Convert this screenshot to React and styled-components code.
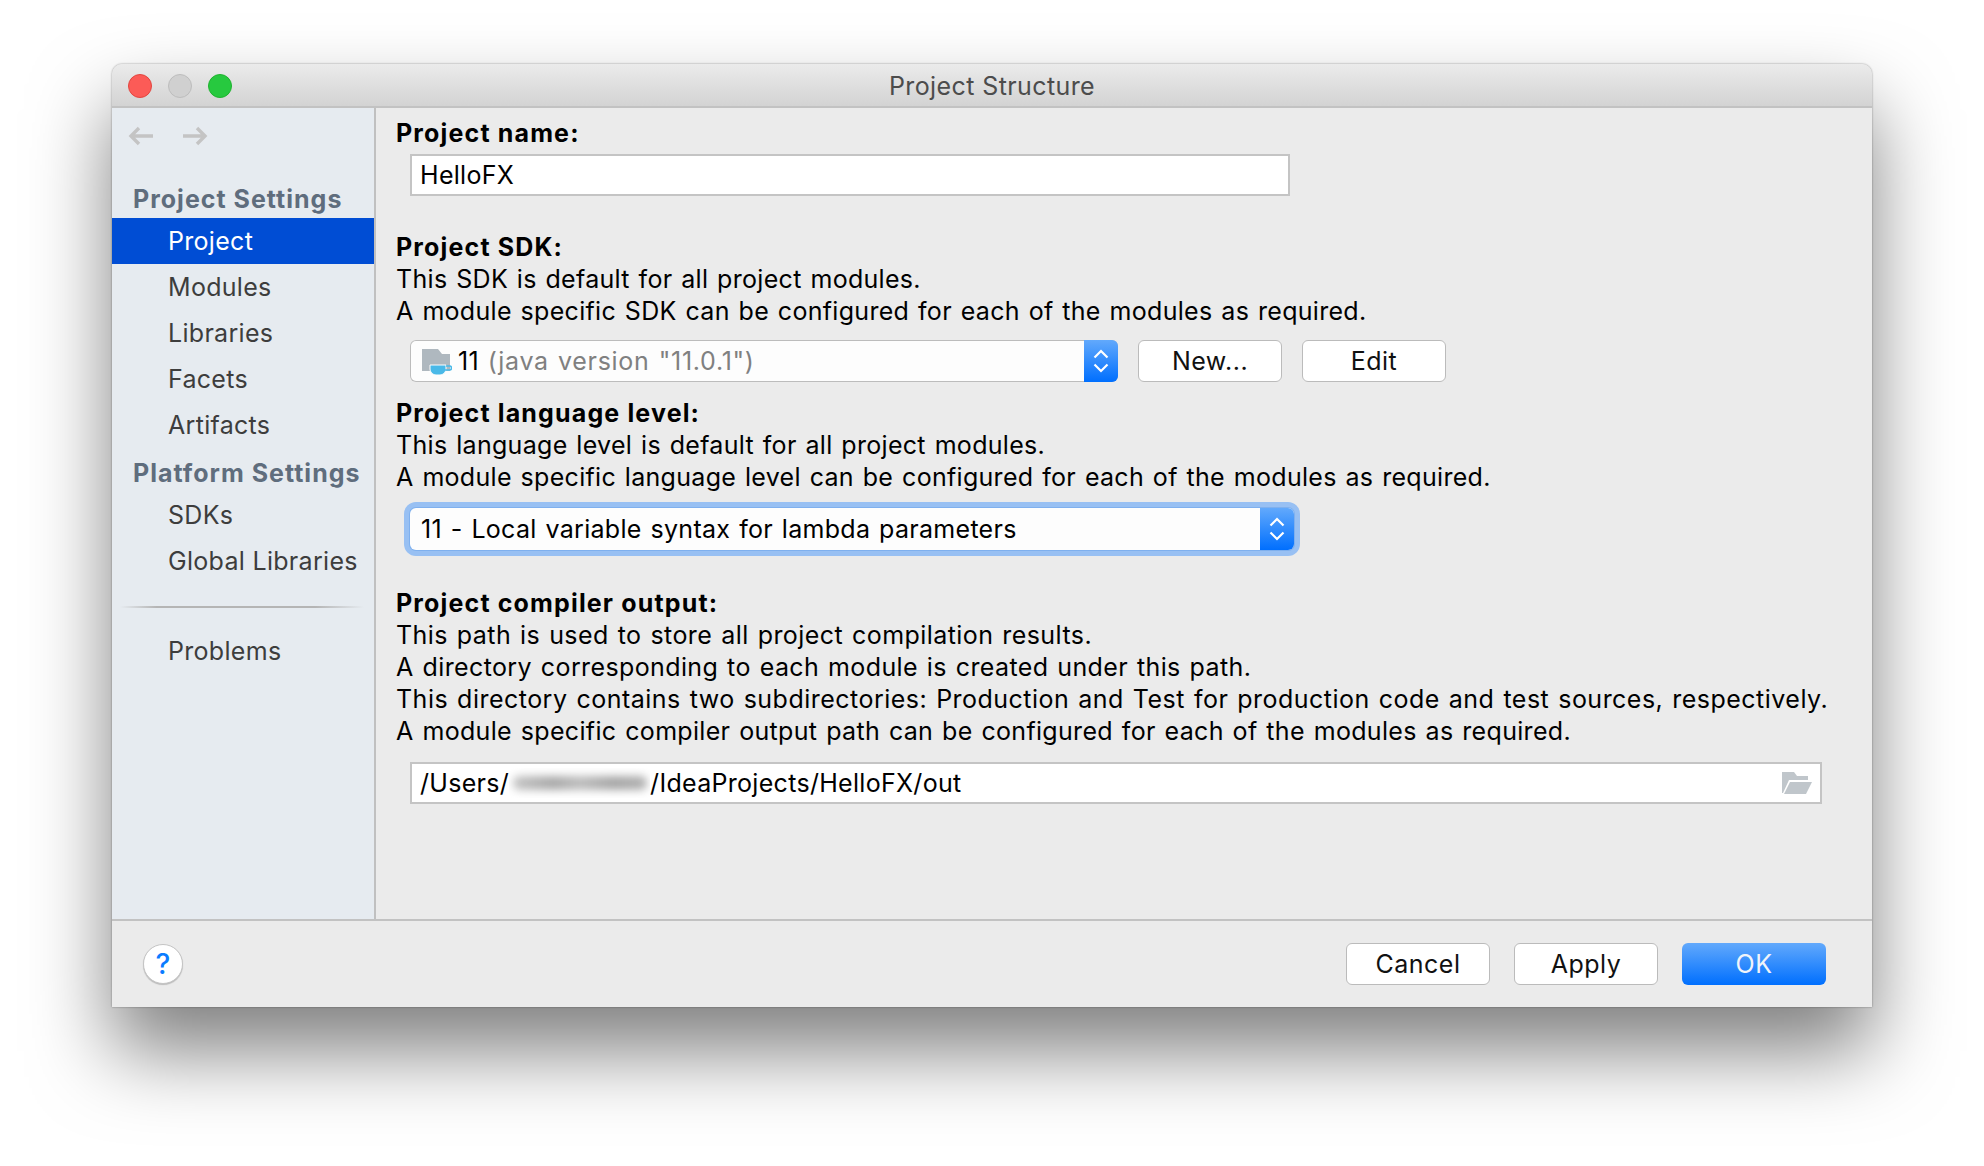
import React from 'react';
import styled, { createGlobalStyle } from 'styled-components';

const GlobalStyle = createGlobalStyle`
  html, body {
    margin: 0;
    background: #ffffff;
    font-family: Inter, "Liberation Sans", sans-serif;
    font-size: 25px;
    letter-spacing: 0.3px;
    word-spacing: 1.5px;
    color: #000;
  }
`;

const Page = styled.div`
  width: 1984px;
  height: 1166px;
  padding: 64px 0 0 112px;
  box-sizing: border-box;
  overflow: hidden;
`;

const Window = styled.div`
  width: 1760px;
  height: 943px;
  display: flex;
  flex-direction: column;
  background: #ebebeb;
  border-radius: 10px 10px 0 0;
  box-shadow: 0 0 2px rgba(0, 0, 0, 0.45), 0 44px 80px rgba(0, 0, 0, 0.5);
`;

const TitleBar = styled.div`
  height: 44px;
  flex: none;
  position: relative;
  display: flex;
  align-items: center;
  justify-content: center;
  padding-top: 2px;
  box-sizing: border-box;
  background: linear-gradient(#ebebeb, #d3d3d3);
  border-bottom: 2px solid #c2c2c2;
  border-radius: 10px 10px 0 0;
`;

const Lights = styled.div`
  position: absolute;
  left: 16px;
  top: 10px;
  display: flex;
  gap: 16px;
`;

const Light = styled.span`
  width: 24px;
  height: 24px;
  box-sizing: border-box;
  border-radius: 50%;
  background: ${(p) => p.$color};
  border: 1px solid ${(p) => p.$edge};
`;

const Title = styled.div`
  color: #4c4c4c;
  letter-spacing: 0.4px;
  word-spacing: 0;
`;

const Body = styled.div`
  flex: 1;
  display: flex;
  min-height: 0;
`;

const Sidebar = styled.div`
  width: 262px;
  flex: none;
  background: #e6ebf0;
  border-right: 2px solid #c0c0c0;
`;

const ArrowRow = styled.div`
  height: 56px;
  padding-left: 16px;
  display: flex;
  align-items: center;
  gap: 28px;
`;

const GroupTitle = styled.div`
  height: 38px;
  line-height: 38px;
  padding: ${(p) => p.$top}px 0 0 21px;
  font-weight: 700;
  letter-spacing: 1px;
  word-spacing: 0;
  color: #5f6d7d;
`;

const NavItem = styled.div`
  height: 46px;
  line-height: 46px;
  padding-left: 56px;
  word-spacing: 0;
  color: ${(p) => (p.$active ? '#fff' : '#3d3d3d')};
  background: ${(p) => (p.$active ? '#004dd4' : 'transparent')};
`;

const NavDivider = styled.div`
  height: 2px;
  margin: 22px 10px 20px 8px;
  background: linear-gradient(90deg, #e6ebf0, #b5b5b5 15%, #b5b5b5 80%, #e6ebf0);
`;

const Main = styled.div`
  flex: 1;
  padding: 9px 0 0 20px;
`;

const Label = styled.div`
  font-weight: 700;
  line-height: 32px;
  letter-spacing: 1.15px;
  word-spacing: 0;
  margin-top: ${(p) => p.$top || 0}px;
`;

const Hint = styled.div`
  line-height: 32px;
  white-space: nowrap;
  letter-spacing: ${(p) => p.$track || 0.3}px;
`;

const Field = styled.div`
  width: ${(p) => p.$width}px;
  height: 42px;
  margin: ${(p) => p.$gap}px 0 0 14px;
  padding: 0 8px 0 8px;
  box-sizing: border-box;
  display: flex;
  align-items: center;
  justify-content: space-between;
  background: #fff;
  border: 2px solid #c4c4c4;
`;

const ComboRow = styled.div`
  display: flex;
  align-items: center;
  gap: 20px;
  margin: 13px 0 0 14px;
`;

const Combo = styled.div`
  width: ${(p) => p.$width}px;
  height: 42px;
  box-sizing: border-box;
  display: flex;
  background: #fdfdfd;
  border-radius: 6px;
  box-shadow: ${(p) =>
    p.$focused ? '0 0 0 1px #7fb0ee, 0 0 0 6px #98c0f3' : 'inset 0 0 0 1px #bcbcbc'};
  margin: ${(p) => (p.$focused ? '15px 0 0 14px' : '0')};
`;

const ComboText = styled.div`
  flex: 1;
  display: flex;
  align-items: center;
  gap: 6px;
  padding-left: ${(p) => p.$pad}px;
`;

const Muted = styled.span`
  color: #808080;
  letter-spacing: 0.7px;
`;

const Stepper = styled.div`
  width: 34px;
  flex: none;
  display: flex;
  align-items: center;
  justify-content: center;
  border-radius: 0 6px 6px 0;
  background: linear-gradient(#62a9fc, #006ffe);
`;

const Button = styled.div`
  width: 144px;
  height: 42px;
  box-sizing: border-box;
  display: flex;
  align-items: center;
  justify-content: center;
  border-radius: 6px;
  letter-spacing: 0.5px;
  color: ${(p) => (p.$primary ? '#f0f4fa' : '#111')};
  background: ${(p) => (p.$primary ? 'linear-gradient(#62a9fc, #006ffe)' : '#fff')};
  border: ${(p) => (p.$primary ? 'none' : '1px solid #bbb')};
`;

const Path = styled.div`
  display: flex;
  align-items: center;
`;

const Redacted = styled.span`
  width: 141px;
  height: 30px;
  display: flex;
  align-items: center;
  justify-content: center;
  background: #fff;
  overflow: hidden;
`;

const RedactedInk = styled.span`
  width: 134px;
  height: 14px;
  background: linear-gradient(90deg, #c4c4c4, #a8a8a8 30%, #bcbcbc 50%, #a6a6a6 75%, #b0b0b0);
  border-radius: 6px;
  filter: blur(4px);
`;

const Footer = styled.div`
  height: 88px;
  flex: none;
  box-sizing: border-box;
  border-top: 2px solid #c2c2c2;
  display: flex;
  align-items: center;
  justify-content: space-between;
  padding: 0 46px 0 31px;
`;

const HelpButton = styled.div`
  width: 40px;
  height: 40px;
  box-sizing: border-box;
  border-radius: 50%;
  background: #fff;
  border: 1px solid #c4c4c4;
  box-shadow: 0 1px 1px rgba(0, 0, 0, 0.2);
  display: flex;
  align-items: center;
  justify-content: center;
  color: #0a7cff;
  font-size: 28px;
  font-weight: 500;
`;

const FooterButtons = styled.div`
  display: flex;
  gap: 24px;
`;

const ArrowIcon = ({ flip }) => (
  <svg width="26" height="20" viewBox="0 0 26 20" style={flip ? { transform: 'scaleX(-1)' } : undefined}>
    <path d="M25 10H3M11 2l-8 8 8 8" fill="none" stroke="#c4c4c4" strokeWidth="3.4" />
  </svg>
);

const StepperIcon = () => (
  <svg width="18" height="28" viewBox="0 0 18 28">
    <path d="M2.5 10.5L9 4l6.5 6.5M2.5 17.5L9 24l6.5-6.5" fill="none" stroke="#fff" strokeWidth="2.2" />
  </svg>
);

const SdkIcon = () => (
  <svg width="31" height="28" viewBox="0 0 31 28">
    <path d="M1 2h16l4 5h8v17H1z" fill="#afb8bf" />
    <path d="M9 18h16v4c0 3-3 6-6 6h-4c-3 0-6-3-6-6z" fill="#4ab9e8" stroke="#fdfdfd" strokeWidth="1" />
    <path d="M25 19h3.5a1.8 1.8 0 0 1 0 4H24" fill="none" stroke="#4ab9e8" strokeWidth="1.6" />
  </svg>
);

const FolderIcon = () => (
  <svg width="30" height="22" viewBox="0 0 30 22">
    <path d="M0 0h12l3 4h11v4H7L1 21H0z" fill="#c0c6cb" />
    <path d="M8 10h22l-6 12H2z" fill="#c0c6cb" />
  </svg>
);

const App = () => {
  return (
    <Page>
      <GlobalStyle />
      <Window>
        <TitleBar>
          <Lights>
            <Light $color="#fc5b57" $edge="#e2463f" />
            <Light $color="#d0d0d0" $edge="#bdbdbd" />
            <Light $color="#27c93f" $edge="#1fb32f" />
          </Lights>
          <Title>Project Structure</Title>
        </TitleBar>
        <Body>
          <Sidebar>
            <ArrowRow>
              <ArrowIcon />
              <ArrowIcon flip />
            </ArrowRow>
            <GroupTitle $top={16}>Project Settings</GroupTitle>
            <NavItem $active>Project</NavItem>
            <NavItem>Modules</NavItem>
            <NavItem>Libraries</NavItem>
            <NavItem>Facets</NavItem>
            <NavItem>Artifacts</NavItem>
            <GroupTitle $top={6}>Platform Settings</GroupTitle>
            <NavItem>SDKs</NavItem>
            <NavItem>Global Libraries</NavItem>
            <NavDivider />
            <NavItem>Problems</NavItem>
          </Sidebar>
          <Main>
            <Label>Project name:</Label>
            <Field $width={880} $gap={5}>HelloFX</Field>

            <Label $top={35}>Project SDK:</Label>
            <Hint>This SDK is default for all project modules.</Hint>
            <Hint>A module specific SDK can be configured for each of the modules as required.</Hint>
            <ComboRow>
              <Combo $width={708}>
                <ComboText $pad={11}>
                  <SdkIcon />
                  <span>11 <Muted>(java version "11.0.1")</Muted></span>
                </ComboText>
                <Stepper><StepperIcon /></Stepper>
              </Combo>
              <Button>New...</Button>
              <Button>Edit</Button>
            </ComboRow>

            <Label $top={15}>Project language level:</Label>
            <Hint>This language level is default for all project modules.</Hint>
            <Hint>A module specific language level can be configured for each of the modules as required.</Hint>
            <Combo $width={884} $focused>
              <ComboText $pad={11}>11 - Local variable syntax for lambda parameters</ComboText>
              <Stepper><StepperIcon /></Stepper>
            </Combo>

            <Label $top={37}>Project compiler output:</Label>
            <Hint $track={0.43}>This path is used to store all project compilation results.</Hint>
            <Hint $track={0.38}>A directory corresponding to each module is created under this path.</Hint>
            <Hint $track={0.48}>This directory contains two subdirectories: Production and Test for production code and test sources, respectively.</Hint>
            <Hint $track={0.32}>A module specific compiler output path can be configured for each of the modules as required.</Hint>
            <Field $width={1412} $gap={15}>
              <Path>
                /Users/
                <Redacted><RedactedInk /></Redacted>
                /IdeaProjects/HelloFX/out
              </Path>
              <FolderIcon />
            </Field>
          </Main>
        </Body>
        <Footer>
          <HelpButton>?</HelpButton>
          <FooterButtons>
            <Button>Cancel</Button>
            <Button>Apply</Button>
            <Button $primary>OK</Button>
          </FooterButtons>
        </Footer>
      </Window>
    </Page>
  );
};

export default App;
